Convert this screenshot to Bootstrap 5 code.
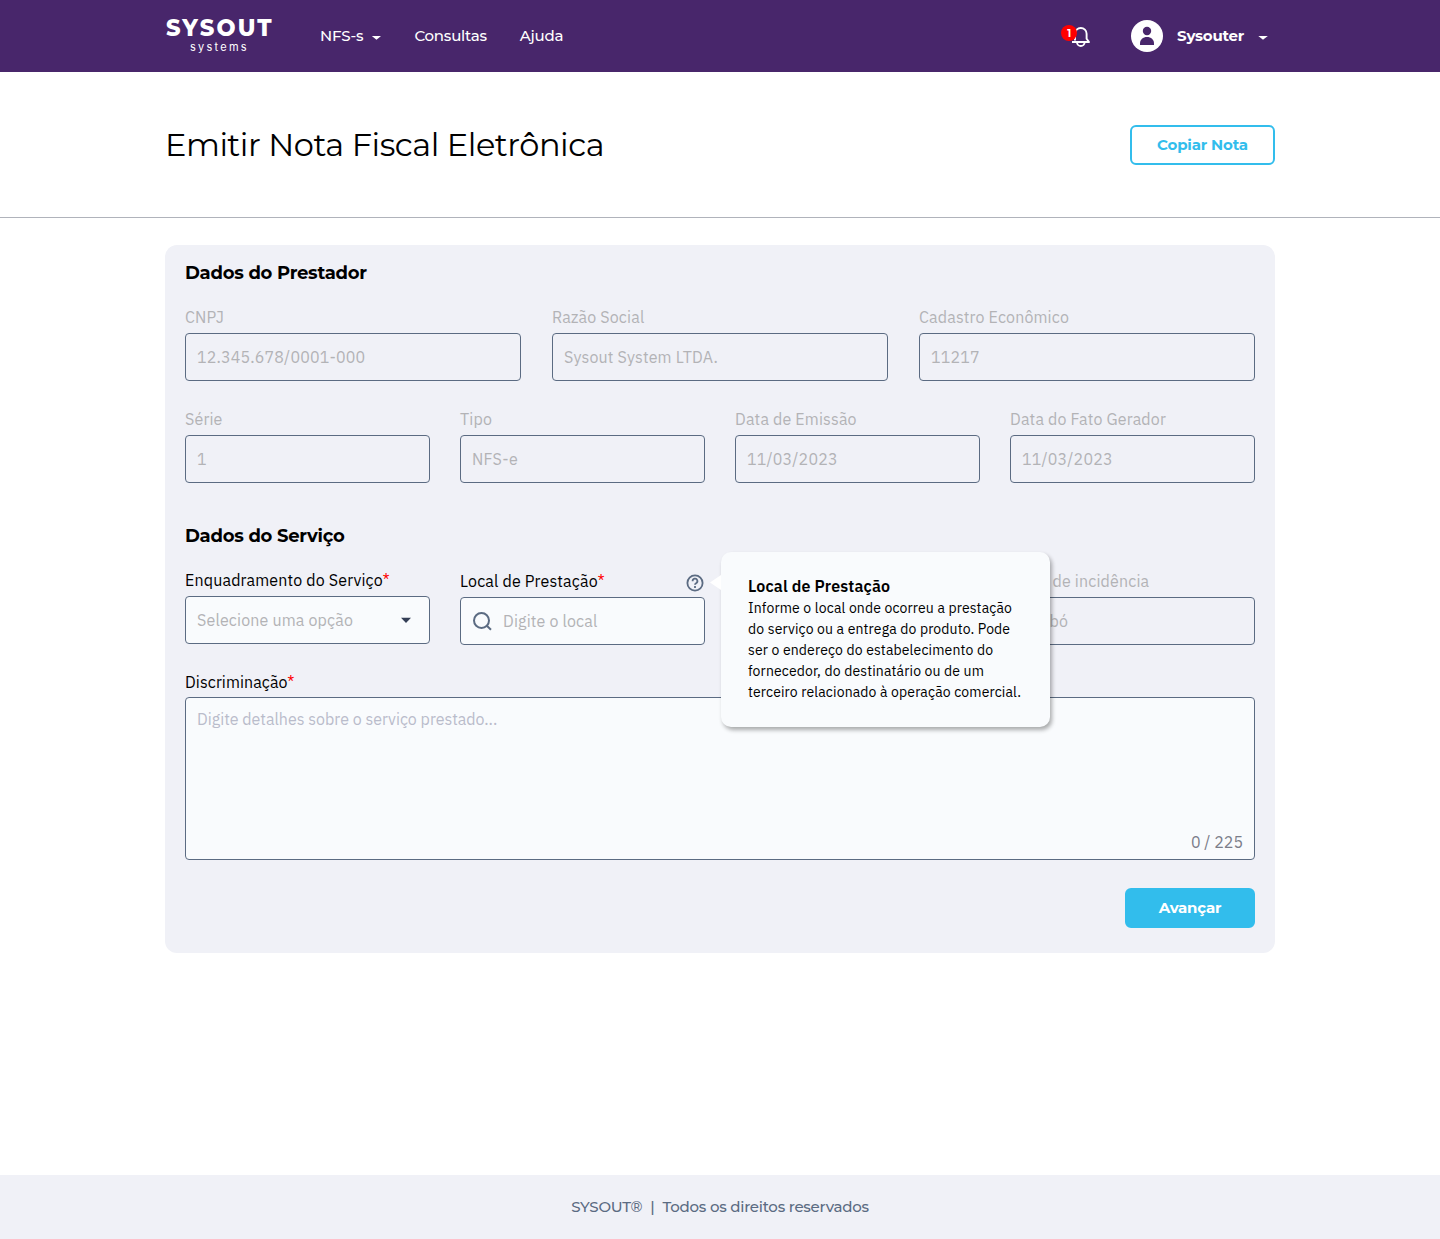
<!DOCTYPE html>
<html lang="pt-BR">
<head>
<meta charset="utf-8">
<meta name="viewport" content="width=device-width, initial-scale=1">
<title>Emitir Nota Fiscal Eletrônica</title>
<link rel="stylesheet" href="https://cdn.jsdelivr.net/npm/bootstrap@5.3.0/dist/css/bootstrap.min.css">
<style>
  :root { --brand: #48266b; --accent: #32bdec; --panel: #f0f1f7; --slate: #5b6b82; --field: #f9fbfd; --muted-ink: #b3b3b6; }
  body { font-family: "IBM Plex Sans", Roboto, sans-serif; color: #000; background: #fff; letter-spacing: .16px; }
  .display-face { font-family: Montserrat, Inter, sans-serif; letter-spacing: -.225px; }
  .page-width { max-width: 1140px; padding-left: 15px; padding-right: 15px; }

  .topbar { height: 72px; background: var(--brand); }
  .brand-mark { width: 108px; margin: 0 47px 0 0; padding: 1px 0 0 1px; color: #fff; }
  .brand-name { font-size: 22.5px; font-weight: 800; line-height: 21px; letter-spacing: 2.15px; white-space: nowrap; }
  .brand-sub { font-family: Inter, sans-serif; font-size: 11px; line-height: 17px; letter-spacing: 2.25px; padding-left: 24px; }
  .topbar .nav-link { color: #fff; font-size: 15px; font-weight: 500; line-height: 24px; padding: 0; }
  .menu { gap: 33px; }
  .bell { margin-right: 39px; }
  .count-dot { left: -11px; top: 0; width: 16px; height: 16px; font-size: 10px; font-weight: 700; line-height: 17px; background: #f00; }
  .user-name { font-size: 15px; font-weight: 700; margin: 0 13px 0 14px; }
  .user-caret { margin-right: 7px; }

  .title-band { height: 146px; border-bottom: 1px solid #b0b3bb; }
  .page-title { font-size: 32px; font-weight: 400; letter-spacing: -.46px; line-height: 40px; }
  .action { height: 40px; border: 2px solid var(--accent); border-radius: 6px; padding: 0; font-size: 15px; font-weight: 700; line-height: 36px; }
  .btn-copy { width: 145px; color: var(--accent); background: #fff; letter-spacing: -.17px; }
  .btn-next { width: 130px; color: #fff; background: var(--accent); }

  .panel { margin-top: 27px; padding: 15px 20px 25px; border-radius: 12px; background: var(--panel); }
  .section-title { font-size: 18px; font-weight: 700; line-height: 27px; margin-bottom: 18px; letter-spacing: -.26px; }
  .section-title.second { margin-top: 40px; }
  .thirds { --bs-gutter-x: 31px; margin-bottom: 26px; }
  .quarters { --bs-gutter-x: 30px; }
  .nudge { margin-top: 1px; }
  .form-label { line-height: 24px; margin-bottom: 4px; display: block; }
  .form-label.low { padding-top: 1px; margin-bottom: 3px; letter-spacing: .08px; }
  .off { color: var(--muted-ink); }
  .req { color: #f00; }
  .panel .form-control { height: 48px; padding: 0 11px; border: 1px solid var(--slate); border-radius: 4px; background: var(--field); letter-spacing: inherit; color: #000; }
  .panel .form-control:disabled { background: transparent; color: var(--muted-ink); opacity: 1; }
  .panel .form-control::placeholder { color: var(--muted-ink); }
  .panel .choice { color: var(--muted-ink); padding-right: 18px; }
  .panel .with-icon { padding-left: 42px; }
  .search-icon { left: 13px; top: 15px; }
  .help-icon { margin-top: 5px; }
  .panel .long-text { height: 163px; padding-top: 9px; resize: none; letter-spacing: 0; }
  .panel .long-text::placeholder { color: #b9bccb; }
  .counter { right: 12px; bottom: 6px; color: #7b7d89; letter-spacing: 0; }
  .form-end { margin-top: 28px; }

  .hint { left: 261px; top: -17px; width: 329px; height: 175px; z-index: 5; padding: 23px 0 0 27px; border-radius: 10px; background: var(--field); box-shadow: 2px 3px 4px rgba(0,0,0,.32); font-size: 14px; line-height: 21px; white-space: nowrap; letter-spacing: .14px; }
  .hint-arrow { left: -11px; top: 23px; }
  .hint-title { font-size: 16px; font-weight: 600; line-height: 23px; letter-spacing: .16px; }

  .footer { height: 64px; background: var(--panel); color: var(--slate); font-size: 15px; font-weight: 500; letter-spacing: -.25px; }
</style>
</head>
<body>
<div class="d-flex flex-column min-vh-100">

<nav class="navbar topbar p-0 display-face">
  <div class="container page-width flex-nowrap">
    <a class="navbar-brand brand-mark d-flex flex-column" href="#">
      <span class="brand-name">SYSOUT</span>
      <span class="brand-sub">systems</span>
    </a>
    <ul class="nav menu flex-nowrap me-auto">
      <li class="nav-item"><a class="nav-link d-flex align-items-center" href="#">NFS-s
        <svg class="ms-2" width="10" height="24" viewBox="0 0 10 24"><path d="M.8 12h9.200L5.500 15.800z" fill="#fff"/></svg></a></li>
      <li class="nav-item"><a class="nav-link" href="#">Consultas</a></li>
      <li class="nav-item"><a class="nav-link" href="#">Ajuda</a></li>
    </ul>
    <div class="d-flex align-items-center">
      <a class="bell position-relative d-block" href="#" aria-label="Notificações">
        <svg class="d-block" width="20" height="22" viewBox="0 0 20 22" fill="none" stroke="#fff" stroke-width="1.900">
          <path d="M3 15.500V8.800a5.800 5.800 0 0 1 11.600 0v4.900l2.400 3.300H0" stroke-linejoin="round"/>
          <path d="M5 17.200a3.800 3.800 0 0 0 7.600 0"/>
        </svg>
        <span class="count-dot position-absolute rounded-circle text-center text-white">1</span>
      </a>
      <a class="nav-link d-flex align-items-center" href="#">
        <svg width="32" height="32" viewBox="0 0 32 32"><circle cx="16" cy="16" r="16" fill="#fff"/><circle cx="16" cy="11" r="4.200" fill="#48266b"/><path d="M9 25v-1.500c0-4 3-6.500 7-6.500s7 2.500 7 6.500V25z" fill="#48266b"/></svg>
        <span class="user-name">Sysouter</span>
        <svg class="user-caret" width="11" height="24" viewBox="0 0 11 24"><path d="M1.300 12h9.500L6 15.800z" fill="#fff"/></svg>
      </a>
    </div>
  </div>
</nav>

<header class="title-band d-flex">
  <div class="container page-width d-flex align-items-center justify-content-between">
    <h1 class="page-title display-face m-0">Emitir Nota Fiscal Eletrônica</h1>
    <button type="button" class="btn action btn-copy display-face">Copiar Nota</button>
  </div>
</header>

<main class="container page-width flex-grow-1">
  <form class="panel">
    <h2 class="section-title display-face">Dados do Prestador</h2>
    <div class="row thirds">
      <div class="col-4"><label class="form-label off" for="cnpj">CNPJ</label><input class="form-control" id="cnpj" value="12.345.678/0001-000" disabled></div>
      <div class="col-4"><label class="form-label off" for="razao">Razão Social</label><input class="form-control" id="razao" value="Sysout System LTDA." disabled></div>
      <div class="col-4"><label class="form-label off" for="cad">Cadastro Econômico</label><input class="form-control" id="cad" value="11217" disabled></div>
    </div>
    <div class="row quarters">
      <div class="col-3"><label class="form-label off" for="serie">Série</label><input class="form-control" id="serie" value="1" disabled></div>
      <div class="col-3"><label class="form-label off" for="tipo">Tipo</label><input class="form-control" id="tipo" value="NFS-e" disabled></div>
      <div class="col-3"><label class="form-label off" for="emissao">Data de Emissão</label><input class="form-control" id="emissao" value="11/03/2023" disabled></div>
      <div class="col-3"><label class="form-label off" for="fato">Data do Fato Gerador</label><input class="form-control" id="fato" value="11/03/2023" disabled></div>
    </div>

    <h2 class="section-title second display-face">Dados do Serviço</h2>
    <div class="row quarters mb-4">
      <div class="col-3">
        <label class="form-label" for="enq">Enquadramento do Serviço<span class="req">*</span></label>
        <button type="button" id="enq" class="form-control choice d-flex align-items-center justify-content-between">Selecione uma opção
          <svg width="10" height="6" viewBox="0 0 10 6"><path d="M0 .800h10L5 6z" fill="#343f56"/></svg></button>
      </div>
      <div class="col-3 nudge">
        <div class="position-relative">
          <div class="d-flex justify-content-between">
            <label class="form-label" for="local">Local de Prestação<span class="req">*</span></label>
            <svg class="help-icon" width="19" height="19" viewBox="0 0 19 19" fill="none" stroke="#5b6b82" stroke-width="1.800"><circle cx="9" cy="9" r="7.600"/><path d="M6.600 7.200a2.400 2.400 0 1 1 3.500 2c-.8.450-1.100.8-1.100 1.600"/><path d="M9 12v1.900"/></svg>
          </div>
          <div class="position-relative">
            <svg class="search-icon position-absolute" width="20" height="20" viewBox="0 0 20 20" fill="none" stroke="#5b6b82" stroke-width="2"><circle cx="8.500" cy="8.500" r="7.500"/><path d="M13.800 13.800l4.200 4"/></svg>
            <input class="form-control with-icon" id="local" placeholder="Digite o local">
          </div>
          <div class="hint position-absolute" role="tooltip">
            <svg class="hint-arrow position-absolute" width="11" height="16" viewBox="0 0 11 16"><path d="M11 0v15L0 7.500z" fill="#fff"/></svg>
            <div class="hint-title">Local de Prestação</div>
            Informe o local onde ocorreu a prestação<br>do serviço ou a entrega do produto. Pode<br>ser o endereço do estabelecimento do<br>fornecedor, do destinatário ou de um<br>terceiro relacionado à operação comercial.
          </div>
        </div>
      </div>
      <div class="col-3 offset-3 nudge"><label class="form-label off" for="inc">Local de incidência</label><input class="form-control" id="inc" value="Timbó" disabled></div>
    </div>

    <label class="form-label low" for="disc">Discriminação<span class="req">*</span></label>
    <div class="position-relative">
      <textarea class="form-control long-text" id="disc" placeholder="Digite detalhes sobre o serviço prestado..."></textarea>
      <span class="counter position-absolute">0 / 225</span>
    </div>
    <div class="form-end d-flex justify-content-end">
      <button type="button" class="btn action btn-next display-face">Avançar</button>
    </div>
  </form>
</main>

<footer class="footer display-face d-flex align-items-center justify-content-center gap-2">
  <span>SYSOUT®</span><span>|</span><span>Todos os direitos reservados</span>
</footer>
</div>
<script src="https://cdn.jsdelivr.net/npm/bootstrap@5.3.0/dist/js/bootstrap.bundle.min.js"></script>
</body>
</html>
